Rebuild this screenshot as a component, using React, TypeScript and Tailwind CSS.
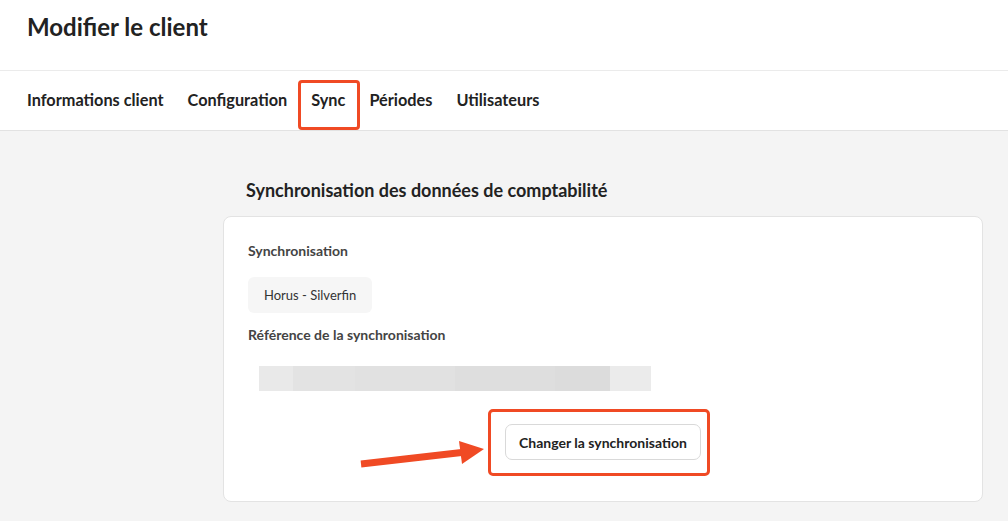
const tabs = ["Informations client", "Configuration", "Sync", "Périodes", "Utilisateurs"];

function Arrow() {
  return (
    <svg className="absolute left-[130px] top-[205px]" width="140" height="50" viewBox="0 0 140 50">
      <line x1="7" y1="42" x2="112" y2="30" stroke="#f04a24" strokeWidth="7" />
      <polygon points="105,19 130,27 108,42" fill="#f04a24" />
    </svg>
  );
}

export default function App() {
  return (
    <div className="w-[1008px] h-[521px] bg-[#f4f4f4] overflow-hidden text-[#2b2b2b]" style={{ fontFamily: "Lato, 'Noto Sans', sans-serif" }}>
      {/* Header */}
      <div className="bg-white h-[71px] px-[27px] pt-[10px] border-b border-[#ebebeb]">
        <h1 className="text-[24px] font-bold leading-[34px] text-[#222]">Modifier le client</h1>
      </div>

      {/* Tabs */}
      <div className="relative z-10 bg-white h-[60px] px-[27px] flex items-center gap-[24px] border-b border-[#e2e2e2]">
        {tabs.map((t) => (
          <div key={t} className="relative text-[16.3px] font-bold text-[#222] leading-none">
            {t}
            {t === "Sync" && (
              <span className="absolute -left-[13px] -right-[15px] top-[-12px] h-[50px] border-[3px] border-[#f04a24] rounded-[4px]" />
            )}
          </div>
        ))}
      </div>

      {/* Content */}
      <div className="pl-[223px] pr-[25px] pt-[45px]">
        <h2 className="pl-[23px] text-[18px] font-bold text-[#222] leading-[28px]">Synchronisation des données de comptabilité</h2>
        <div className="relative mt-[12px] bg-white border border-[#e3e3e3] rounded-[8px] px-[24px] pt-[24px] pb-[41px]">
          <div className="text-[14px] font-bold text-[#444] leading-[20px]">Synchronisation</div>
          <div className="mt-[16px] inline-block bg-[#f6f6f6] rounded-[6px] px-[16px] h-[36px] leading-[36px] text-[13px] text-[#333]">Horus - Silverfin</div>
          <div className="mt-[12px] text-[14px] font-bold text-[#444] leading-[20px]">Référence de la synchronisation</div>
          <div className="mt-[21px] ml-[11px] flex h-[25px] w-[392px]">
            <div className="w-[34px] bg-[#e9e9e9]" />
            <div className="w-[62px] bg-[#e3e3e3]" />
            <div className="w-[100px] bg-[#e1e1e1]" />
            <div className="w-[100px] bg-[#dedede]" />
            <div className="w-[55px] bg-[#dcdcdc]" />
            <div className="flex-1 bg-[#ebebeb]" />
          </div>
          <div className="mt-[33px] flex justify-center">
            <div className="relative">
              <button className="h-[36px] px-[13px] bg-white border border-[#d9d9d9] rounded-[7px] text-[14px] font-bold text-[#222]">
                Changer la synchronisation
              </button>
              <span className="absolute -left-[17px] -right-[9px] -top-[15px] -bottom-[16px] border-[3px] border-[#f04a24] rounded-[5px]" />
            </div>
          </div>
          <Arrow />
        </div>
      </div>
    </div>
  );
}
